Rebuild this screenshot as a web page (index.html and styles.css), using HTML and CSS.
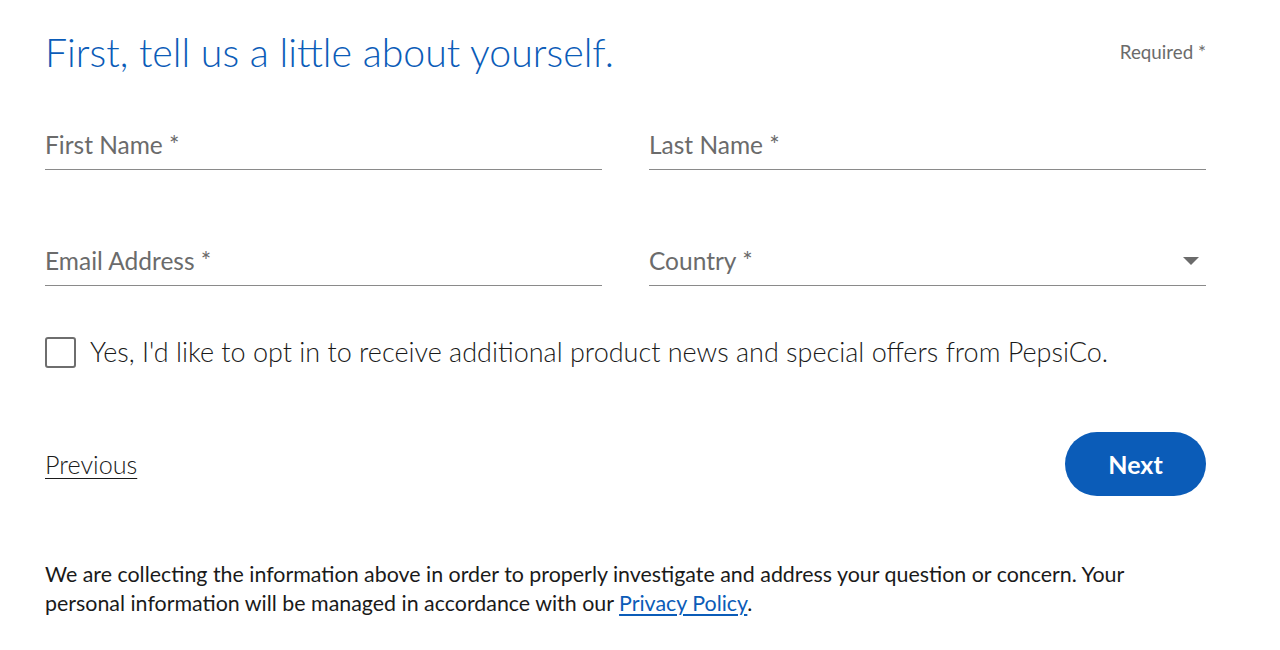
FILE: index.html
```html
<!DOCTYPE html>
<html lang="en">
<head>
  <meta charset="UTF-8">
  <meta name="viewport" content="width=device-width, initial-scale=1.0">
  <title>Contact Us</title>
  <link rel="stylesheet" href="styles.css">
</head>
<body>
  <div class="container">
    <header class="form-header">
      <h1>First, tell us a little about yourself.</h1>
      <span class="required-note">Required *</span>
    </header>

    <form class="about-form" onsubmit="return false;">
      <div class="field-grid">
        <div class="field">
          <input type="text" id="firstName" placeholder="First Name *">
        </div>
        <div class="field">
          <input type="text" id="lastName" placeholder="Last Name *">
        </div>
        <div class="field">
          <input type="email" id="email" placeholder="Email Address *">
        </div>
        <div class="field select-field">
          <div class="select-box">
            <span class="select-label">Country *</span>
            <span class="caret"></span>
          </div>
        </div>
      </div>

      <label class="opt-in">
        <input type="checkbox" id="optIn">
        <span class="box"></span>
        <span class="opt-text">Yes, I'd like to opt in to receive additional product news and special offers from PepsiCo.</span>
      </label>

      <div class="actions">
        <a href="#" class="prev-link">Previous</a>
        <button type="submit" class="next-btn">Next</button>
      </div>
    </form>

    <p class="disclaimer">We are collecting the information above in order to properly investigate and address your question or concern. Your personal information will be managed in accordance with our <a href="#">Privacy Policy</a>.</p>
  </div>
</body>
</html>
```

FILE: styles.css
```css
:root {
  --brand-blue: #0b5cb8;
  --label-color: #6b6b6b;
  --line-color: #8a8a8a;
  --text-color: #1a1a1a;
}

* {
  box-sizing: border-box;
  margin: 0;
  padding: 0;
}

body {
  font-family: 'Lato', 'Liberation Sans', sans-serif;
  background-color: #ffffff;
  color: var(--text-color);
}

.container {
  padding: 0 74px 0 45px;
}

.form-header {
  display: flex;
  justify-content: space-between;
  align-items: flex-start;
  padding-top: 26px;
}

h1 {
  font-weight: 300;
  font-size: 39.3px;
  line-height: 52px;
  color: var(--brand-blue);
}

.required-note {
  font-size: 18.8px;
  color: var(--label-color);
  padding-top: 14px;
}

.field-grid {
  display: grid;
  grid-template-columns: 1fr 1fr;
  column-gap: 47px;
  row-gap: 66px;
  margin-top: 42px;
}

.field input,
.select-box {
  width: 100%;
  height: 50px;
  border: none;
  border-bottom: 1.5px solid var(--line-color);
  font-family: inherit;
  font-size: 24.5px;
  color: var(--text-color);
  background: transparent;
  outline: none;
}

.field input::placeholder {
  color: var(--label-color);
}

.select-box {
  display: flex;
  align-items: center;
  justify-content: space-between;
}

.select-label {
  color: var(--label-color);
}

.caret {
  width: 0;
  height: 0;
  border-left: 8px solid transparent;
  border-right: 8px solid transparent;
  border-top: 8px solid #6b6b6b;
  margin-right: 7px;
}

.opt-in {
  display: flex;
  align-items: center;
  gap: 14px;
  margin-top: 50px;
  cursor: pointer;
}

.opt-in input {
  display: none;
}

.box {
  width: 31px;
  height: 31px;
  border: 2.5px solid #6e6e6e;
  border-radius: 3px;
  flex-shrink: 0;
}

.opt-text {
  font-weight: 300;
  font-size: 27px;
  line-height: 32px;
  color: var(--text-color);
}

.actions {
  display: flex;
  justify-content: space-between;
  align-items: center;
  margin-top: 64px;
}

.prev-link {
  font-weight: 300;
  font-size: 25.2px;
  color: var(--text-color);
  text-decoration: underline;
  text-underline-offset: 4px;
  text-decoration-thickness: 1px;
}

.next-btn {
  width: 141px;
  height: 64px;
  border: none;
  border-radius: 32px;
  background-color: var(--brand-blue);
  color: #ffffff;
  font-family: inherit;
  font-weight: 700;
  font-size: 25px;
  cursor: pointer;
}

.disclaimer {
  margin-top: 64px;
  font-size: 21.4px;
  line-height: 29px;
  color: var(--text-color);
  max-width: 1100px;
}

.disclaimer a {
  color: var(--brand-blue);
  text-underline-offset: 3px;
}
```
